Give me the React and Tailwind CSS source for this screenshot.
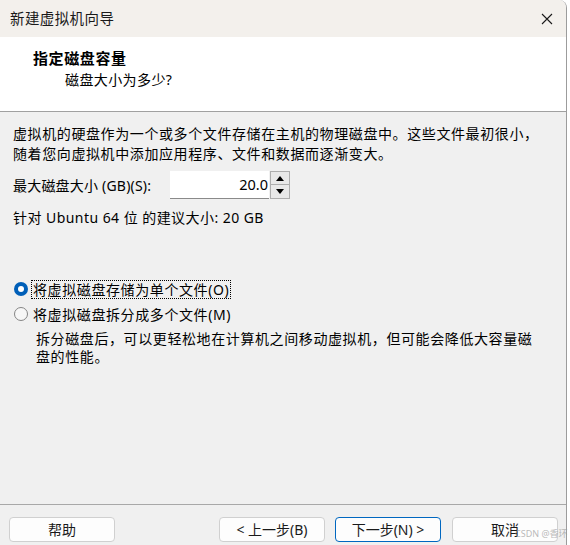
const FONT = "font-['Segoe_UI','Noto_Sans','Noto_Sans_CJK_SC',sans-serif]";

function Radio({ checked, label, focused }) {
  return (
    <div className="flex items-center h-[20px]">
      {checked ? (
        <div className="ml-[1px] w-[14px] h-[14px] rounded-full bg-[#005fb8] flex items-center justify-center">
          <div className="w-[6px] h-[6px] rounded-full bg-white" />
        </div>
      ) : (
        <div className="ml-[1px] w-[14px] h-[14px] rounded-full border border-[#858585] bg-[#f7f7f7]" />
      )}
      <span
        className={
          focused
            ? "ml-[4px] px-[1px] leading-[17px] outline outline-1 outline-dotted outline-[#000] tracking-[0.6px]"
            : "ml-[5px] leading-[17px] tracking-[0.6px]"
        }
      >
        {label}
      </span>
    </div>
  );
}

function Btn({ children, primary }) {
  return (
    <button
      className={
        "w-[106px] h-[25px] rounded-[4px] bg-[#fdfdfd] text-[14px] text-[#1a1a1a] flex items-center justify-center border " +
        (primary ? "border-[#0067c0]" : "border-[#d0d0d0]")
      }
    >
      {children}
    </button>
  );
}

export default function App() {
  return (
    <div className={"w-[570px] h-[545px] bg-white relative overflow-hidden text-[#000] " + FONT}>
      <div className="w-[567px] h-[545px] flex flex-col border-r border-[#9c9c9c] rounded-tr-[8px] overflow-hidden">
        {/* Title bar */}
        <div className="h-[37px] shrink-0 bg-[#f3f0ec] flex items-center justify-between pl-[10px] pr-[13px]">
          <span className="text-[14.5px] text-[#1a1a1a] tracking-[0.4px]">新建虚拟机向导</span>
          <svg width="12" height="12" viewBox="0 0 12 12" fill="none">
            <path d="M1 1L11 11M11 1L1 11" stroke="#1a1a1a" strokeWidth="1.1" />
          </svg>
        </div>

        {/* Header */}
        <div className="h-[74px] shrink-0 bg-white pl-[33px] pt-[11px]">
          <p className="text-[15px] font-bold leading-[20px] tracking-[0.6px]">指定磁盘容量</p>
          <p className="mt-[2px] pl-[32px] text-[14px] leading-[20px] tracking-[0.4px]">磁盘大小为多少?</p>
        </div>

        {/* Content */}
        <div className="flex-1 bg-[#f0f0f0] border-t border-[#a0a0a0] pl-[13px] pt-[12px] text-[14px]">
          <p className="leading-[20px] tracking-[0.6px]">
            虚拟机的硬盘作为一个或多个文件存储在主机的物理磁盘中。这些文件最初很小，
            <br />
            随着您向虚拟机中添加应用程序、文件和数据而逐渐变大。
          </p>

          <div className="mt-[7px] h-[28px] flex items-center">
            <span className="w-[157px] tracking-[0.2px]">最大磁盘大小 (GB)(S):</span>
            <div className="w-[99px] h-[28px] bg-white border-b border-[#8a8a8a] flex items-center justify-end pr-[1px] text-[14.5px]">
              20.0
            </div>
            <div className="ml-[1px] w-[20px] h-[28px] flex flex-col">
              <div className="h-[14px] bg-[#e8e8e8] border border-[#adadad] flex items-center justify-center">
                <svg width="8" height="5" viewBox="0 0 8 5"><path d="M4 0L8 5H0Z" fill="#000" /></svg>
              </div>
              <div className="h-[14px] bg-[#e8e8e8] border border-t-0 border-[#adadad] flex items-center justify-center">
                <svg width="8" height="5" viewBox="0 0 8 5"><path d="M0 0H8L4 5Z" fill="#000" /></svg>
              </div>
            </div>
          </div>

          <p className="mt-[9px] leading-[20px] tracking-[0.45px]">针对 Ubuntu 64 位 的建议大小: 20 GB</p>

          <div className="mt-[51px]">
            <Radio checked focused label="将虚拟磁盘存储为单个文件(O)" />
          </div>
          <div className="mt-[5px]">
            <Radio label="将虚拟磁盘拆分成多个文件(M)" />
          </div>
          <p className="mt-[6px] ml-[23px] leading-[18px] tracking-[0.6px]">
            拆分磁盘后，可以更轻松地在计算机之间移动虚拟机，但可能会降低大容量磁
            <br />
            盘的性能。
          </p>
        </div>

        {/* Footer */}
        <div className="h-[41px] shrink-0 bg-[#f0f0f0] border-t border-[#a8a8a8] flex items-start pt-[12px] pl-[9px]">
          <Btn>帮助</Btn>
          <div className="ml-[104px] flex gap-[10px]">
            <Btn>&lt; 上一步(B)</Btn>
            <Btn primary>下一步(N) &gt;</Btn>
          </div>
          <div className="ml-[11px]">
            <Btn>取消</Btn>
          </div>
        </div>
      </div>

      {/* watermark */}
      <span className="absolute left-[515px] top-[527px] text-[9px] text-[#9a9a9a]/70 whitespace-nowrap">
        CSDN @香环
      </span>
    </div>
  );
}
